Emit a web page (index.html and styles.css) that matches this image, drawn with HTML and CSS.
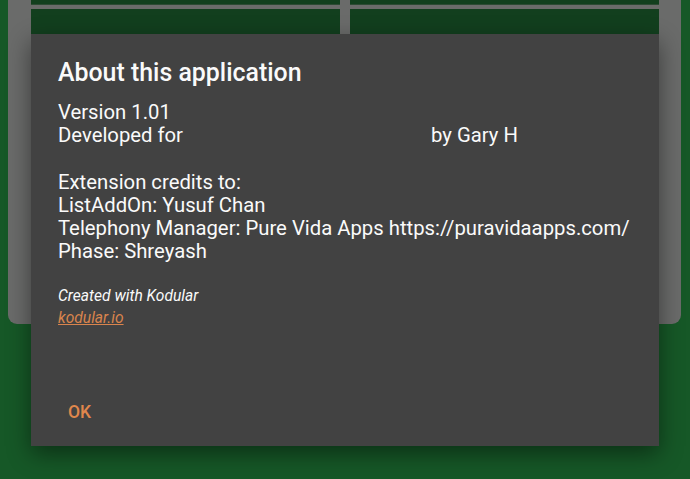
FILE: index.html
```html
<!DOCTYPE html>
<html>
<head>
<meta charset="utf-8">
<link rel="stylesheet" href="styles.css">
</head>
<body>
<div class="screen">
  <div class="panel">
    <div class="cell"></div><div class="cell"></div>
    <div class="cell"></div><div class="cell"></div>
  </div>
  <div class="dialog">
    <h1 class="title">About this application</h1>
    <div class="body">
      <p class="line">Version 1.01</p>
      <p class="line">Developed for<span class="redact"></span>by Gary H</p>
      <p class="line blank">&nbsp;</p>
      <p class="line">Extension credits to:</p>
      <p class="line">ListAddOn: Yusuf Chan</p>
      <p class="line">Telephony Manager: Pure Vida Apps https://puravidaapps.com/</p>
      <p class="line">Phase: Shreyash</p>
    </div>
    <div class="credit">
      <p class="made">Created with Kodular</p>
      <a class="link" href="#">kodular.io</a>
    </div>
    <div class="actions">
      <button class="ok">OK</button>
    </div>
  </div>
</div>
</body>
</html>
```
FILE: styles.css
```css
html, body {
  margin: 0;
  padding: 0;
}
body {
  background: #165827;
  width: 690px;
  height: 479px;
  overflow: hidden;
  font-family: Roboto, "Liberation Sans", sans-serif;
}
.screen {
  position: relative;
  width: 690px;
  height: 479px;
}
.panel {
  margin-left: 8px;
  width: 673px;
  height: 324px;
  box-sizing: border-box;
  padding: 0 22px 0 23px;
  background: #6a6b6a;
  border-radius: 0 0 9px 9px;
  display: grid;
  grid-template-columns: 309px 309px;
  grid-template-rows: 5px 25px;
  column-gap: 10px;
  row-gap: 4px;
  align-content: start;
}
.cell {
  background: #123f1e;
}
.panel .cell:nth-child(-n+2) {
  border-bottom: 1px solid #2d4a34;
}
.dialog {
  position: absolute;
  left: 31px;
  top: 34px;
  width: 628px;
  height: 412px;
  box-sizing: border-box;
  background: #424242;
  box-shadow: 0 8px 22px rgba(0, 0, 0, 0.45);
  padding: 24px 27px 0 27px;
  display: flex;
  flex-direction: column;
  color: #fafafa;
}
.title {
  margin: 0;
  font-size: 24.9px;
  font-weight: 500;
  line-height: 30px;
}
.body {
  margin-top: 13px;
}
.line {
  margin: 0;
  font-size: 20.3px;
  line-height: 23.2px;
  white-space: nowrap;
}
.redact {
  display: inline-block;
  width: 248px;
}
.credit {
  margin-top: 22px;
  display: flex;
  flex-direction: column;
  align-items: flex-start;
}
.made {
  margin: 0;
  font-size: 15.6px;
  font-style: italic;
  line-height: 22px;
}
.link {
  font-size: 15.6px;
  font-style: italic;
  line-height: 22px;
  color: #d9844d;
  text-decoration: underline;
}
.actions {
  margin-top: auto;
  padding: 0 0 19px 0;
}
.ok {
  background: none;
  border: none;
  padding: 0 10px;
  margin: 0;
  font-family: Roboto, "Liberation Sans", sans-serif;
  font-size: 17.5px;
  font-weight: 500;
  line-height: 30px;
  color: #e0874c;
}
```
